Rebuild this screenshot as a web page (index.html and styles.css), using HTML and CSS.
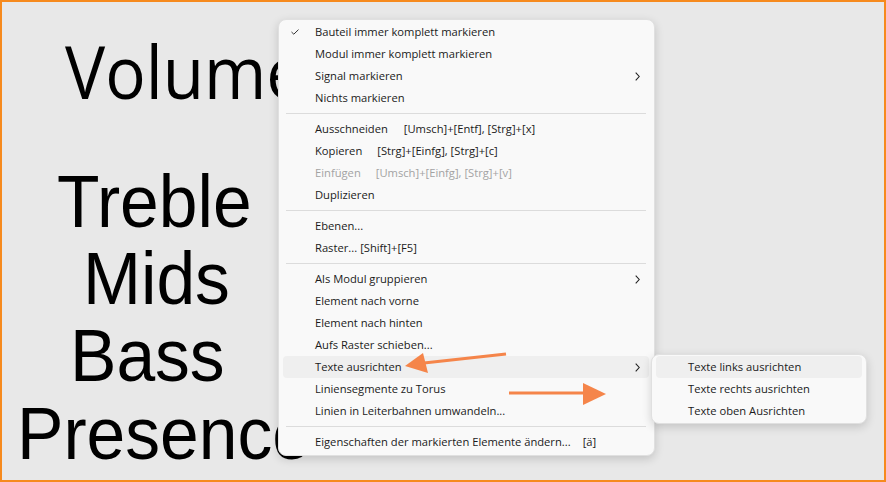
FILE: index.html
```html
<!DOCTYPE html>
<html lang="en">
<head>
  <meta charset="UTF-8">
  <title>Kontextmenü</title>
  <link rel="stylesheet" href="styles.css">
</head>
<body>
  <div class="canvas">
    <div class="label volume">Volume</div>
    <div class="label treble">Treble</div>
    <div class="label mids">Mids</div>
    <div class="label bass">Bass</div>
    <div class="label presence">Presence</div>

    <div class="menu main-menu">
      <div class="item"><span class="check"><svg width="8" height="6" viewBox="0 0 8 6"><path d="M0.5 3 L2.8 5.2 L7.5 0.6" fill="none" stroke="#333" stroke-width="1"/></svg></span>Bauteil immer komplett markieren</div>
      <div class="item">Modul immer komplett markieren</div>
      <div class="item">Signal markieren<span class="chev"><svg width="5" height="9" viewBox="0 0 5 9"><path d="M0.7 0.7 L4.2 4.5 L0.7 8.3" fill="none" stroke="#222" stroke-width="1.1"/></svg></span></div>
      <div class="item">Nichts markieren</div>
      <div class="sep"></div>
      <div class="item">Ausschneiden<span class="key k16">[Umsch]+[Entf], [Strg]+[x]</span></div>
      <div class="item">Kopieren<span class="key">[Strg]+[Einfg], [Strg]+[c]</span></div>
      <div class="item disabled">Einfügen<span class="key">[Umsch]+[Einfg], [Strg]+[v]</span></div>
      <div class="item">Duplizieren</div>
      <div class="sep"></div>
      <div class="item">Ebenen...</div>
      <div class="item">Raster...<span class="key k3">[Shift]+[F5]</span></div>
      <div class="sep"></div>
      <div class="item">Als Modul gruppieren<span class="chev"><svg width="5" height="9" viewBox="0 0 5 9"><path d="M0.7 0.7 L4.2 4.5 L0.7 8.3" fill="none" stroke="#222" stroke-width="1.1"/></svg></span></div>
      <div class="item">Element nach vorne</div>
      <div class="item">Element nach hinten</div>
      <div class="item">Aufs Raster schieben...</div>
      <div class="item active">Texte ausrichten<span class="chev"><svg width="5" height="9" viewBox="0 0 5 9"><path d="M0.7 0.7 L4.2 4.5 L0.7 8.3" fill="none" stroke="#222" stroke-width="1.1"/></svg></span></div>
      <div class="item">Liniensegmente zu Torus</div>
      <div class="item">Linien in Leiterbahnen umwandeln...</div>
      <div class="sep"></div>
      <div class="item">Eigenschaften der markierten Elemente ändern...<span class="key k12">[ä]</span></div>
    </div>

    <div class="menu sub-menu">
      <div class="item active">Texte links ausrichten</div>
      <div class="item">Texte rechts ausrichten</div>
      <div class="item">Texte oben Ausrichten</div>
    </div>

    <svg class="arrows" width="886" height="482" viewBox="0 0 886 482">
      <line x1="506" y1="354" x2="424" y2="363" stroke="#f5854a" stroke-width="3"/>
      <polygon points="405,366 423,353 428,373" fill="#f5854a"/>
      <line x1="509" y1="393" x2="585" y2="393" stroke="#f5854a" stroke-width="3"/>
      <polygon points="606,394 583,383 583,405" fill="#f5854a"/>
    </svg>
  </div>
</body>
</html>
```

FILE: styles.css
```css
body {
  margin: 0;
  background: #e8e8e8;
}
.canvas {
  position: relative;
  width: 886px;
  height: 482px;
  box-sizing: border-box;
  border: 2px solid #f68a1e;
  background: #e8e8e8;
  overflow: hidden;
}
/* labels on the schematic canvas */
.label {
  position: absolute;
  font-family: "Liberation Sans", Arial, sans-serif;
  font-size: 74px;
  line-height: 1;
  color: #000;
  white-space: nowrap;
  transform: scaleX(0.94);
  transform-origin: 0 0;
}
.volume {
  font-family: "Open Sans", sans-serif;
  transform: scaleX(0.91);
  left: 63px;
  top: 32px;
}
.treble { left: 55px; top: 163px; }
.mids { left: 81px; top: 240px; }
.bass { left: 68px; top: 317px; }
.presence { left: 15px; top: 395px; }

.menu {
  position: absolute;
  background: #f9f9f9;
  border: 1px solid #e0e0e0;
  border-radius: 8px;
  box-shadow: 0 3px 10px rgba(0, 0, 0, 0.16);
  font-family: "Open Sans", sans-serif;
  font-size: 11.2px;
  color: #1b1b1b;
  box-sizing: border-box;
}
.main-menu {
  left: 276px;
  top: 17px;
  width: 377px;
  padding: 1px 5px 2px 4px;
}
.sub-menu {
  left: 649px;
  top: 352px;
  width: 216px;
  padding: 1px 4px;
}
.item {
  position: relative;
  height: 22px;
  line-height: 22px;
  padding-left: 32px;
  border-radius: 4px;
  white-space: nowrap;
}
.item.active {
  background: #efefef;
}
.item.disabled {
  color: #a3a3a3;
}
.check {
  position: absolute;
  left: 8px;
  top: 8px;
  line-height: 0;
}
.chev {
  position: absolute;
  right: 9px;
  top: 7px;
  line-height: 0;
}
.key { margin-left: 15px; }
.k16 { margin-left: 16px; }
.k3 { margin-left: 3px; }
.k12 { margin-left: 12px; }
.sep {
  height: 1px;
  margin: 4px 3px;
  background: #dcdcdc;
}
.arrows {
  position: absolute;
  left: -2px;
  top: -2px;
}
```
